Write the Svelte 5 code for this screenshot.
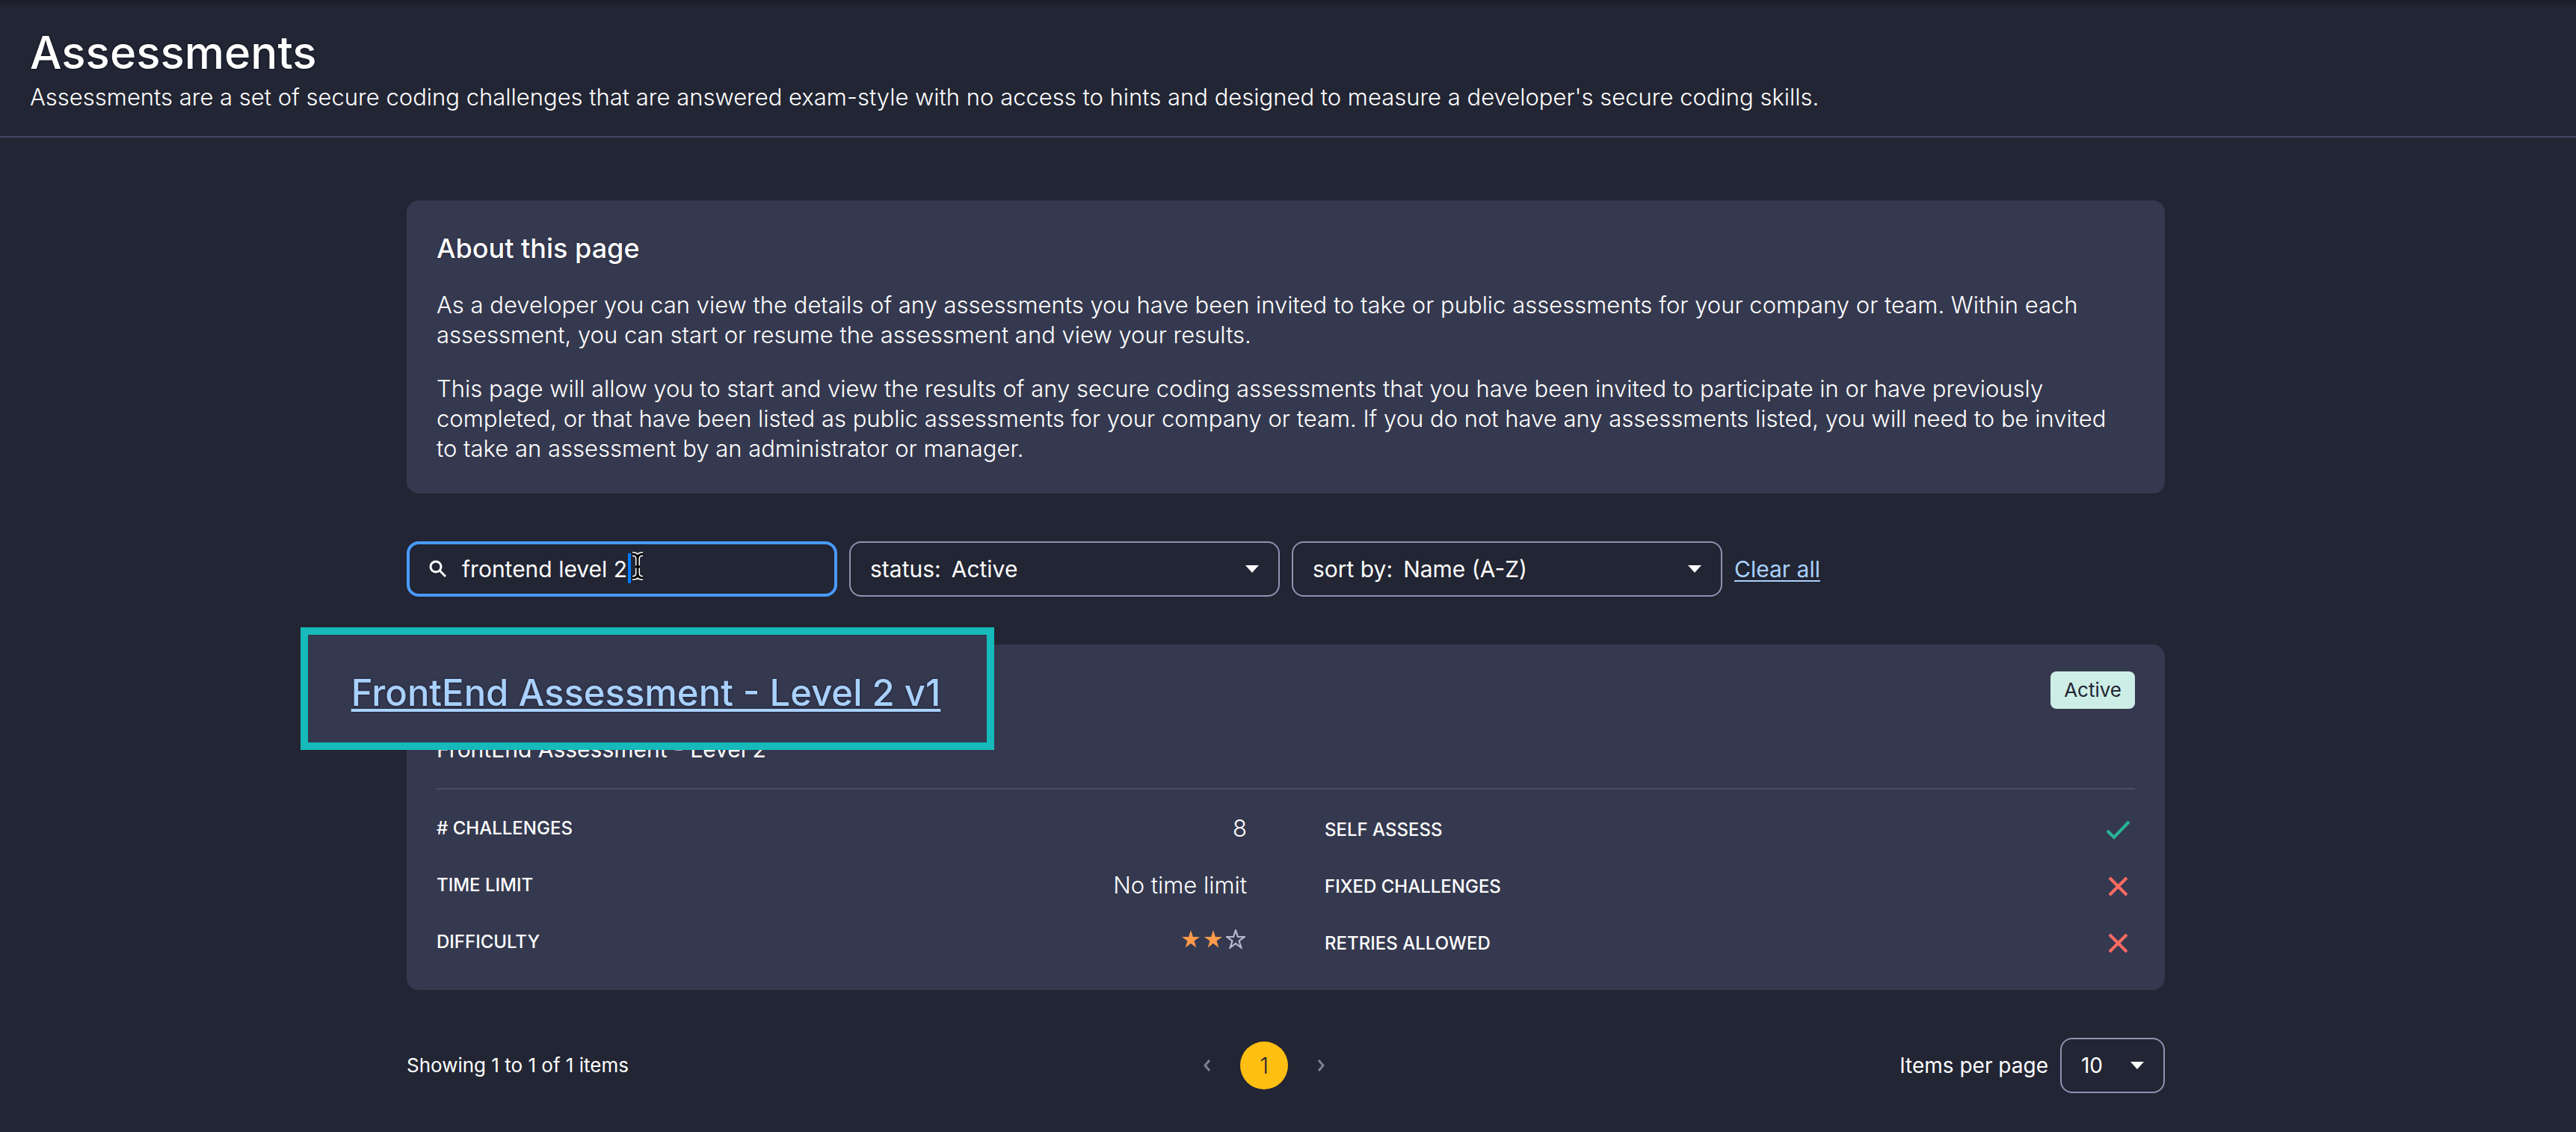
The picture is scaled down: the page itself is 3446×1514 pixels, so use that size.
<script>
  let query = $state('frontend level 2');
  let status = $state('Active');
  let sort = $state('Name (A-Z)');
  let perPage = $state('10');

  const facts = [
    { label: '# Challenges', value: '8' },
    { label: 'Time limit', value: 'No time limit' },
    { label: 'Difficulty', stars: 2 }
  ];
  const flags = [
    { label: 'Self assess', on: true },
    { label: 'Fixed challenges', on: false },
    { label: 'Retries allowed', on: false }
  ];
</script>

{#snippet caret()}
  <svg class="caret" viewBox="0 0 18 10" aria-hidden="true"><path d="M0 0h18l-9 10z" /></svg>
{/snippet}

<header class="top">
  <h1>Assessments</h1>
  <p>Assessments are a set of secure coding challenges that are answered exam-style with no access to hints and designed to measure a developer's secure coding skills.</p>
</header>

<main>
  <section class="panel about">
    <h2>About this page</h2>
    <p>As a developer you can view the details of any assessments you have been invited to take or public assessments for your company or team. Within each<br />assessment, you can start or resume the assessment and view your results.</p>
    <p>This page will allow you to start and view the results of any secure coding assessments that you have been invited to participate in or have previously<br />completed, or that have been listed as public assessments for your company or team. If you do not have any assessments listed, you will need to be invited<br />to take an assessment by an administrator or manager.</p>
  </section>

  <form class="filters">
    <div class="box search">
      <svg class="glass" viewBox="0 0 24 24" aria-hidden="true">
        <circle cx="9" cy="9" r="7" /><path d="M14 14l8 8" />
      </svg>
      <input type="text" aria-label="Search assessments" bind:value={query} />
      <span class="bar"></span>
      <svg class="ibeam" viewBox="0 0 20 38" aria-hidden="true">
        <path class="rim" d="M3 3q7 0 7 6v20q0 6-7 6M17 3q-7 0-7 6v20q0 6 7 6M7 20h6" />
        <path class="core" d="M3 3q7 0 7 6v20q0 6-7 6M17 3q-7 0-7 6v20q0 6 7 6M7 20h6" />
      </svg>
    </div>
    <label class="box">
      <span>status:</span>
      <select bind:value={status}><option>Active</option><option>Inactive</option></select>
      {@render caret()}
    </label>
    <label class="box">
      <span>sort by:</span>
      <select bind:value={sort}><option>Name (A-Z)</option><option>Name (Z-A)</option></select>
      {@render caret()}
    </label>
    <a class="clear" href="#clear">Clear all</a>
  </form>

  <article class="panel card">
    <div class="callout"><a href="#assessment">FrontEnd Assessment - Level 2 v1</a></div>
    <div class="badge-row"><span class="badge">Active</span></div>
    <p class="desc">FrontEnd Assessment - Level 2</p>
    <div class="details">
      <dl>
        {#each facts as fact}
          <div class="row">
            <dt>{fact.label}</dt>
            <dd>
              {#if fact.stars}
                <span class="stars" role="img" aria-label="{fact.stars} of 3">
                  {#each [1, 2, 3] as n}
                    <svg class="star" class:empty={n > fact.stars} viewBox="0 0 24 24" aria-hidden="true">
                      <path d="M12 1l2.7 8.2H23l-6.8 5 2.6 8.3L12 17.4l-6.8 5.1 2.6-8.3-6.8-5h8.3z" />
                    </svg>
                  {/each}
                </span>
              {:else}
                {fact.value}
              {/if}
            </dd>
          </div>
        {/each}
      </dl>
      <dl class="right">
        {#each flags as flag}
          <div class="row">
            <dt>{flag.label}</dt>
            <dd>
              {#if flag.on}
                <svg class="mark yes" viewBox="0 0 44 44" role="img" aria-label="Yes"><path d="M7 23l9 9 20-21" /></svg>
              {:else}
                <svg class="mark no" viewBox="0 0 44 44" role="img" aria-label="No"><path d="M10 10l23 23M33 10l-23 23" /></svg>
              {/if}
            </dd>
          </div>
        {/each}
      </dl>
    </div>
  </article>

  <footer>
    <span class="count">Showing 1 to 1 of 1 items</span>
    <nav aria-label="Pages">
      <button type="button" aria-label="Previous page"><svg viewBox="0 0 12 16"><path d="M9 1L3 8l6 7" /></svg></button>
      <button type="button" class="current" aria-current="page">1</button>
      <button type="button" aria-label="Next page"><svg viewBox="0 0 12 16"><path d="M3 1l6 7-6 7" /></svg></button>
    </nav>
    <label class="per-page">
      <span>Items per page</span>
      <span class="box small">
        <select bind:value={perPage}><option>10</option><option>25</option></select>
        {@render caret()}
      </span>
    </label>
  </footer>
</main>

<style>
  :global(body) {
    background: #222533;
    color: #fff;
    font-family: Inter, 'Liberation Sans', sans-serif;
    font-size: 30px;
    line-height: 40px;
  }
  :global(*) { box-sizing: border-box; }
  h1, h2, p, dl, dd { margin: 0; }

  .top {
    padding: 36px 40px 32px;
    border-bottom: 2px solid #444866;
    background: linear-gradient(#1b1d29, #222533 12px);
  }
  h1 {
    font-size: 60px;
    line-height: 68px;
    font-weight: 450;
    text-shadow: 0 0 3px #0b0d18;
  }
  .top p { margin-top: 6px; font-size: 31px; font-weight: 300; }

  main { padding: 84px 550px 0 544px; }
  .panel { background: #35394f; border-radius: 16px; }

  .about { padding: 40px; }
  h2 {
    font-size: 36px;
    line-height: 48px;
    font-weight: 450;
    text-shadow: 0 0 2px #14172a;
  }
  .about p { margin-top: 32px; font-size: 31px; font-weight: 350; white-space: nowrap; }

  .filters {
    display: flex;
    align-items: center;
    gap: 16px;
    margin-top: 64px;
  }
  .box {
    position: relative;
    display: flex;
    align-items: center;
    width: 576px;
    height: 74px;
    padding: 0 26px;
    border: 2px solid #8f92b2;
    border-radius: 16px;
  }
  .search { border: 4px solid #499bff; }
  .glass {
    width: 24px;
    height: 24px;
    margin-right: 20px;
    fill: none;
    stroke: #fff;
    stroke-width: 3;
  }
  input, select, button {
    font: inherit;
    color: inherit;
    background: none;
    border: 0;
    padding: 0;
    outline: 0;
  }
  input { flex: 1; min-width: 0; }
  .bar {
    position: absolute;
    left: 292px;
    top: 12px;
    width: 4px;
    height: 40px;
    background: #007bff;
  }
  .ibeam {
    position: absolute;
    left: 295px;
    top: 10px;
    width: 20px;
    height: 38px;
    fill: none;
  }
  .rim { stroke: #fff; stroke-width: 6; }
  .core { stroke: #000; stroke-width: 3; }
  select { appearance: none; flex: 1; min-width: 0; margin-left: 14px; }
  .caret { width: 18px; height: 10px; fill: #fff; }
  a { color: #a9d1ff; }
  .clear { text-underline-offset: 4px; text-decoration-thickness: 2px; }

  .card { position: relative; margin-top: 64px; padding: 36px 40px 24px; }
  .callout {
    position: absolute;
    left: -142px;
    top: -23px;
    display: flex;
    align-items: center;
    justify-content: center;
    width: 928px;
    height: 164px;
    padding: 12px 4px 0 0;
    border: 10px solid #16baba;
    background: #35394f;
    font-size: 49px;
    line-height: 60px;
    font-weight: 500;
    white-space: nowrap;
    text-shadow: 0 0 3px #14172a;
  }
  .callout a { text-decoration-thickness: 4px; text-underline-offset: 4px; text-decoration-skip-ink: none; }
  .badge-row { display: flex; justify-content: flex-end; }
  .badge {
    padding: 5px 18px;
    border-radius: 8px;
    background: #cdeee6;
    color: #222533;
    font-size: 26px;
  }
  .desc { margin-top: 34px; }
  .details {
    display: grid;
    grid-template-columns: 1fr 1fr;
    gap: 104px;
    margin-top: 32px;
    padding-top: 14px;
    border-top: 2px solid #4a4e65;
  }
  .row {
    display: flex;
    align-items: center;
    justify-content: space-between;
    height: 76px;
  }
  .right { padding-top: 2px; }
  dt { font-size: 24px; font-weight: 500; text-transform: uppercase; }
  dd { display: flex; font-size: 31px; font-weight: 350; }
  .stars { display: flex; gap: 4px; padding: 0 2px 8px 0; }
  .star { width: 26px; height: 26px; fill: #ff9a4b; }
  .star.empty { fill: none; stroke: #b7b9d0; stroke-width: 2; }
  .mark { width: 44px; height: 44px; fill: none; stroke-width: 4; }
  .yes { stroke: #28b595; }
  .no { stroke: #ff6b61; }

  footer {
    display: flex;
    align-items: center;
    justify-content: space-between;
    margin-top: 64px;
  }
  .count { font-size: 26px; }
  .per-page { display: flex; align-items: center; gap: 16px; font-size: 28px; }
  nav { display: flex; align-items: center; gap: 34px; }
  nav button { display: flex; align-items: center; justify-content: center; width: 20px; height: 64px; }
  nav svg { width: 12px; height: 16px; fill: none; stroke: #7d8090; stroke-width: 3; }
  nav .current { width: 64px; border-radius: 50%; background: #ffbf12; color: #222533; font-weight: 350; }
  .small { width: 140px; }
  .small select { margin: 0; }
</style>
